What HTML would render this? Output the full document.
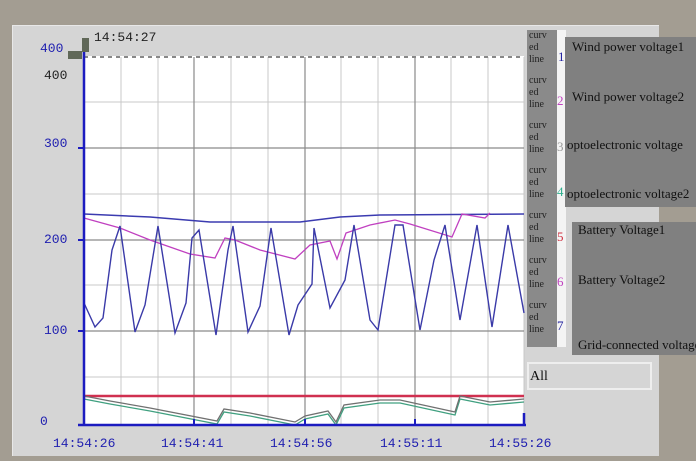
<!DOCTYPE html>
<html><head><style>
body{margin:0;width:696px;height:461px;background:#a39d92;position:relative;overflow:hidden;font-family:"Liberation Serif",serif}
.p{position:absolute}
</style></head><body>
<div class="p" style="left:12px;top:25px;width:646px;height:430px;background:#d5d5d5;border-left:1px solid #e8e8e8;border-top:1px solid #e8e8e8"></div>
<svg class="p" style="left:0;top:0" width="696" height="461" font-family="Liberation Mono,monospace">
<rect x="84" y="56" width="440" height="369" fill="#fff"/>
<g stroke="#c8c8c8" stroke-width="1">
<path d="M121 57V425M158 57V425M194 57V425M231 57V425M268 57V425M305 57V425M341 57V425M378 57V425M415 57V425M451 57V425M488 57V425M524 57V425"/>
<path d="M84 102H524M84 194H524M84 285H524M84 377H524"/>
</g>
<g stroke="#8a8a8a" stroke-width="1.2">
<path d="M84 148H524M84 240H524M84 331H524M194 57V425M305 57V425M415 57V425"/>
</g>
<path d="M84 57H524" stroke="#888" stroke-width="2" stroke-dasharray="4 4"/>
<polyline fill="none" stroke="#3b3bb0" stroke-width="1.5" points="84,214 150,217 210,222 300,222 340,217 380,215 524,214"/>
<polyline fill="none" stroke="#c040c0" stroke-width="1.3" points="84,218 120,228 150,240 190,254 215,258 225,238 235,240 260,250 295,259 310,245 330,241 337,259 346,233 370,225 395,220 410,224 452,237 462,214 485,218 490,213"/>
<polyline fill="none" stroke="#3a3aa8" stroke-width="1.4" points="84,303 95,327 103,318 112,250 120,226 135,332 145,305 158,226 175,333 186,303 192,238 199,230 216,335 228,250 233,226 248,332 260,306 271,228 289,335 298,305 312,284 314,228 330,308 345,280 354,225 370,320 378,330 395,225 403,225 420,330 434,260 445,225 460,320 477,225 492,327 508,225 524,313"/>
<path d="M84 396H524" stroke="#d03050" stroke-width="2.5"/>
<polyline fill="none" stroke="#40a080" stroke-width="1.3" points="84,399 110,404 150,411 217,424 224,412 250,416 295,425 305,419 328,414 336,425 344,408 380,403 400,403 455,415 460,399 490,405 524,402"/>
<polyline fill="none" stroke="#707070" stroke-width="1.3" points="84,396 110,401 150,408 217,421 224,409 250,413 295,422 305,416 328,411 336,422 344,405 380,400 400,400 455,412 460,396 490,402 524,399"/>
<path d="M84 50V426M78 425H526M524 425V413" stroke="#1c1cc0" stroke-width="2.5" fill="none"/>
<path d="M78 148H84M78 240H84M78 331H84M194 425V419M305 425V419M415 425V419" stroke="#1c1cc0" stroke-width="2"/>
<rect x="82" y="38" width="7" height="14" fill="#606858"/>
<rect x="68" y="51" width="14" height="8" fill="#606858"/>
<g font-size="13" fill="#2020b0">
<text x="40" y="52">400</text><text x="44" y="147">300</text><text x="44" y="243">200</text><text x="44" y="334">100</text><text x="40" y="425">0</text>
<text x="53" y="447">14:54:26</text><text x="161" y="447">14:54:41</text><text x="270" y="447">14:54:56</text><text x="380" y="447">14:55:11</text><text x="489" y="447">14:55:26</text>
</g>
<text x="44" y="79" font-size="13" fill="#222">400</text>
<text x="94" y="41" font-size="13" fill="#222">14:54:27</text>
</svg>
<div class="p" style="left:527px;top:30px;width:30px;height:317px;background:#8a8a8a"></div>
<div class="p" style="left:557px;top:30px;width:9px;height:317px;background:#f4f4f4"></div>
<div class="p" style="left:529px;top:30px;font-size:10px;line-height:12px;color:#222;width:28px">
<div style="height:45px">curv<br>ed<br>line</div><div style="height:45px">curv<br>ed<br>line</div><div style="height:45px">curv<br>ed<br>line</div><div style="height:45px">curv<br>ed<br>line</div><div style="height:45px">curv<br>ed<br>line</div><div style="height:45px">curv<br>ed<br>line</div><div>curv<br>ed<br>line</div></div>
<div class="p" style="left:558px;font-size:13px;top:49px;color:#2020a0">1</div>
<div class="p" style="left:557px;font-size:13px;top:93px;color:#c040c0">2</div>
<div class="p" style="left:557px;font-size:13px;top:139px;color:#999">3</div>
<div class="p" style="left:557px;font-size:13px;top:184px;color:#30b090">4</div>
<div class="p" style="left:557px;font-size:13px;top:229px;color:#d03040">5</div>
<div class="p" style="left:557px;font-size:13px;top:274px;color:#c040c0">6</div>
<div class="p" style="left:557px;font-size:13px;top:318px;color:#2020a0">7</div>
<div class="p" style="left:565px;top:37px;width:131px;height:170px;background:#808080;font-size:13px;color:#111;white-space:nowrap;overflow:hidden">
<div class="p" style="left:7px;top:2px">Wind power voltage1</div>
<div class="p" style="left:7px;top:52px">Wind power voltage2</div>
<div class="p" style="left:2px;top:100px">optoelectronic voltage</div>
<div class="p" style="left:2px;top:149px">optoelectronic voltage2</div></div>
<div class="p" style="left:572px;top:222px;width:124px;height:133px;background:#808080;font-size:13px;color:#111;white-space:nowrap;overflow:hidden">
<div class="p" style="left:6px;top:0px">Battery Voltage1</div>
<div class="p" style="left:6px;top:50px">Battery Voltage2</div>
<div class="p" style="left:6px;top:115px">Grid-connected voltage</div></div>
<div class="p" style="left:527px;top:362px;width:125px;height:28px;border:2px solid #eee;box-sizing:border-box;font-size:14px;padding:5px 0 0 1px;color:#111">All</div>
</body></html>
